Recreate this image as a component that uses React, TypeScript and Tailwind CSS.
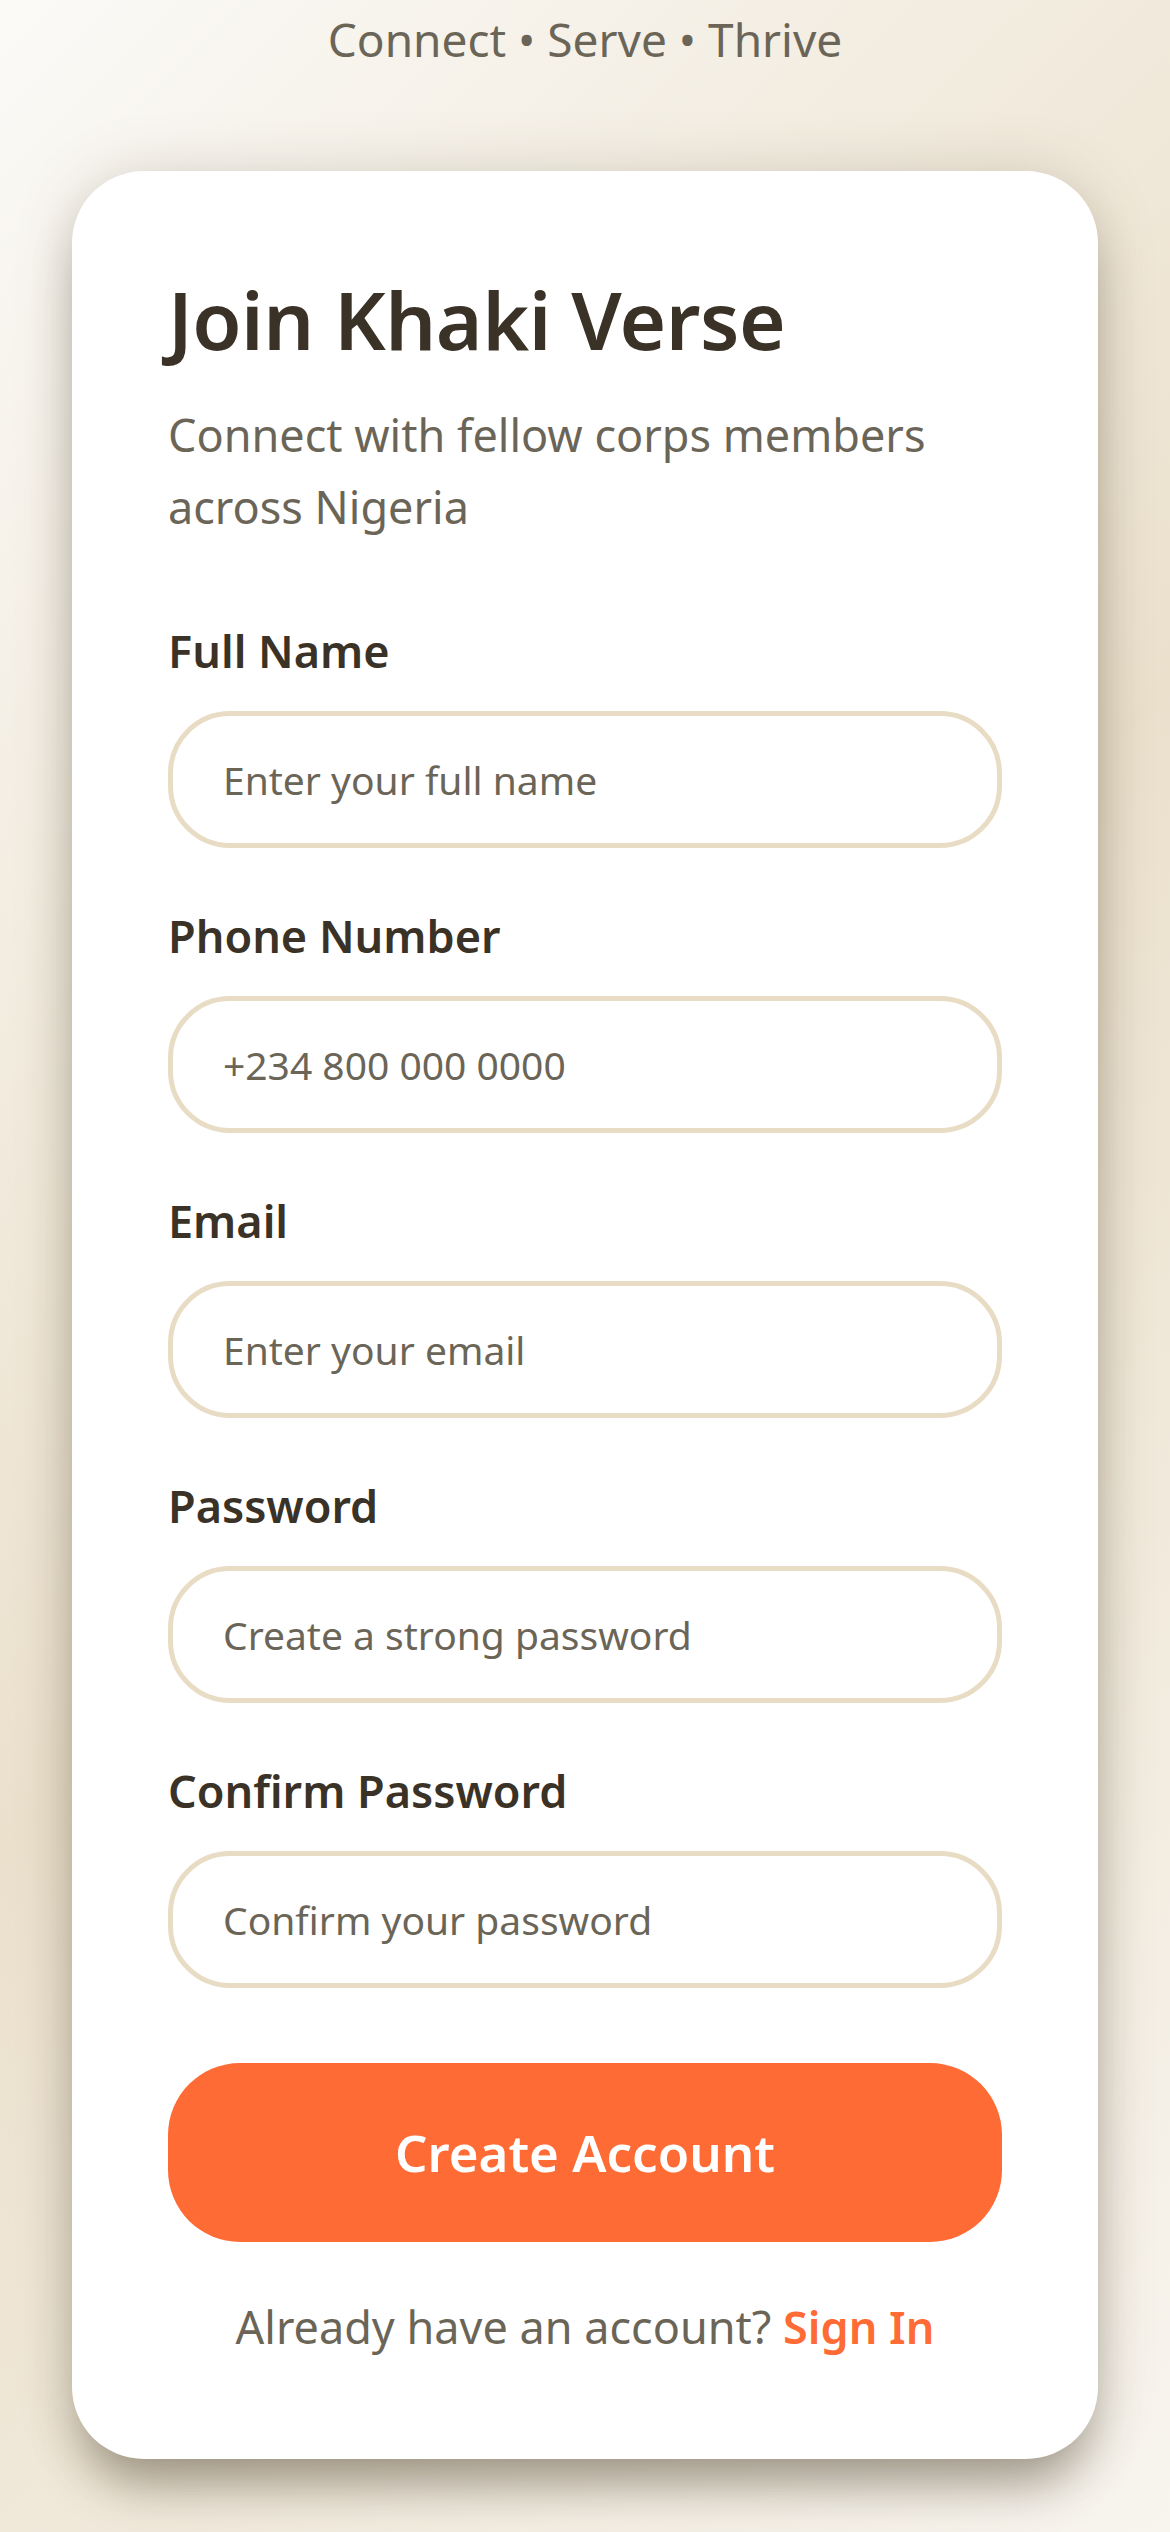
import React from "react";

const fields = [
    { label: "Full Name", placeholder: "Enter your full name", type: "text" },
    { label: "Phone Number", placeholder: "+234 800 000 0000", type: "tel" },
    { label: "Email", placeholder: "Enter your email", type: "email" },
    { label: "Password", placeholder: "Create a strong password", type: "password" },
    { label: "Confirm Password", placeholder: "Confirm your password", type: "password" },
];

export default function App() {
    return (
        <div
            className="min-h-[2532px] w-full flex flex-col items-center bg-[linear-gradient(135deg,#fbfaf7_0%,#ebe0cc_50%,#f8f5ef_100%)] font-['Noto_Sans',sans-serif]"
        >
            <p className="pt-[9px] text-[46px] leading-[60px] text-[#6b6558]">
                Connect • Serve • Thrive
            </p>

            <div className="mt-[102px] w-[1026px] rounded-[72px] bg-white px-[96px] pt-[100px] pb-[96px] shadow-[0_36px_50px_-12px_rgba(70,60,40,0.45),0_0_60px_rgba(90,75,50,0.18)]">
                <h1 className="text-[80px] leading-[96px] font-semibold text-[#3a3226] tracking-[-0.5px]">
                    Join Khaki Verse
                </h1>
                <p className="mt-[32px] text-[45px] leading-[72px] text-[#6b6558]">
                    Connect with fellow corps members across Nigeria
                </p>

                <form className="mt-[75px] flex flex-col gap-[55px]">
                    {fields.map((f) => (
                        <div key={f.label} className="flex flex-col gap-[27px]">
                            <label className="text-[45px] leading-[66px] font-semibold text-[#3a3226]">
                                {f.label}
                            </label>
                            <input
                                type={f.type}
                                placeholder={f.placeholder}
                                className="h-[137px] w-full rounded-[62px] border-[5px] border-[#e8dcc4] bg-white px-[50px] text-[39px] text-[#3a3226] placeholder:text-[#6b6558] outline-none"
                            />
                        </div>
                    ))}

                    <button
                        type="button"
                        className="mt-[20px] h-[179px] w-full rounded-[72px] bg-[#ff6b35] text-[51px] font-semibold text-white"
                    >
                        Create Account
                    </button>
                </form>

                <p className="mt-[49px] text-center text-[45px] leading-[72px] text-[#6b6558]">
                    Already have an account?{" "}
                    <span className="font-semibold text-[#ff6b35]">Sign In</span>
                </p>
            </div>
        </div>
    );
}
